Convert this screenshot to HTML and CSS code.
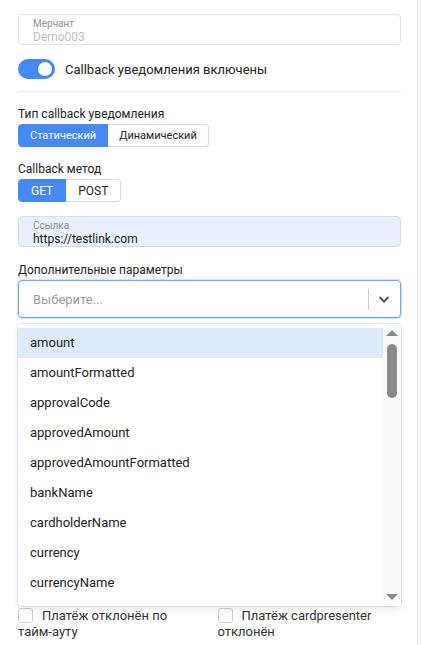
FILE: index.html
```html
<!DOCTYPE html>
<html lang="ru">
<head>
    <meta charset="UTF-8">
    <meta name="viewport" content="width=device-width, initial-scale=1.0">
    <title>Callback настройки</title>
    <link rel="stylesheet" href="styles.css">
</head>
<body>
    <div class="panel">
        <div class="field field-disabled">
            <span class="field-label">Мерчант</span>
            <span class="field-value">Demo003</span>
        </div>

        <label class="switch-row">
            <span class="switch"><span class="switch-knob"></span></span>
            Callback уведомления включены
        </label>

        <div class="divider"></div>

        <div class="group-label">Тип callback уведомления</div>
        <div class="segmented">
            <button class="seg active">Статический</button>
            <button class="seg">Динамический</button>
        </div>

        <div class="group-label">Callback метод</div>
        <div class="segmented segmented-method">
            <button class="seg active">GET</button>
            <button class="seg">POST</button>
        </div>

        <div class="field field-filled">
            <span class="field-label">Ссылка</span>
            <span class="field-value">https://testlink.com</span>
        </div>

        <div class="group-label group-label-wide">Дополнительные параметры</div>
        <div class="select">
            <div class="select-control">
                <span class="select-placeholder">Выберите...</span>
                <span class="select-sep"></span>
                <svg class="select-chevron" width="14" height="14" viewBox="0 0 14 14">
                    <path d="M2.5 5l4.5 4.5L11.5 5" fill="none" stroke="#555" stroke-width="2"/>
                </svg>
            </div>
            <div class="select-menu">
                <ul class="select-options">
                    <li class="option focused">amount</li>
                    <li class="option">amountFormatted</li>
                    <li class="option">approvalCode</li>
                    <li class="option">approvedAmount</li>
                    <li class="option">approvedAmountFormatted</li>
                    <li class="option">bankName</li>
                    <li class="option">cardholderName</li>
                    <li class="option">currency</li>
                    <li class="option">currencyName</li>
                    <li class="option">depositedAmount</li>
                </ul>
                <div class="scrollbar">
                    <span class="scroll-arrow up"></span>
                    <div class="scroll-track"><span class="scroll-thumb"></span></div>
                    <span class="scroll-arrow down"></span>
                </div>
            </div>
        </div>

        <div class="events-grid">
            <label class="check"><span class="box"></span>Платёж отклонён по тайм-ауту</label>
            <label class="check"><span class="box"></span>Платёж cardpresenter отклонён</label>
        </div>
    </div>
</body>
</html>
```

FILE: styles.css
```css
* {
    box-sizing: border-box;
}

body {
    margin: 0;
    background-color: #f6f6f6;
    font-family: Roboto, "Noto Sans", Arial, sans-serif;
    color: #222222;
    overflow: hidden;
}

.panel {
    width: 418px;
    height: 645px;
    background-color: #ffffff;
    border-right: 1px solid #e4e4e4;
    padding: 14px 16px 0 18px;
}

/* text fields with floating label */
.field {
    height: 31px;
    border: 1px solid #e3e3e3;
    border-radius: 4px;
    padding: 3px 14px 0;
    display: flex;
    flex-direction: column;
}

.field-label {
    font-size: 10px;
    line-height: 12px;
    color: #8f8f8f;
}

.field-value {
    font-size: 12px;
    line-height: 15px;
}

.field-disabled .field-value {
    color: #bdbdbd;
}

.field-filled {
    margin-top: 14px;
    background-color: #e8f0fd;
    border-color: #d6dde8;
}

/* toggle */
.switch-row {
    display: flex;
    align-items: center;
    gap: 10px;
    margin-top: 14px;
    font-size: 13px;
    height: 20px;
}

.switch {
    width: 37px;
    height: 20px;
    border-radius: 10px;
    background-color: #4589f6;
    position: relative;
    flex-shrink: 0;
}

.switch-knob {
    position: absolute;
    top: 3px;
    right: 3px;
    width: 14px;
    height: 14px;
    border-radius: 50%;
    background-color: #ffffff;
}

.divider {
    height: 1px;
    background-color: #ececec;
    margin-top: 12px;
}

.group-label {
    font-size: 12px;
    line-height: 16px;
    margin-top: 14px;
    margin-bottom: 2px;
}

.group-label-wide {
    margin-top: 15px;
    margin-bottom: 2px;
}

/* segmented buttons */
.segmented {
    display: flex;
    height: 23px;
}

.seg {
    font-family: inherit;
    font-size: 11px;
    padding: 0 11px;
    background-color: #ffffff;
    color: #222222;
    border: 1px solid #dcdcdc;
    border-left: none;
    cursor: pointer;
}

.segmented-method .seg {
    font-size: 12px;
    padding: 0 12px;
}

.seg:first-child {
    border-left: 1px solid #dcdcdc;
    border-radius: 4px 0 0 4px;
}

.seg:last-child {
    border-radius: 0 4px 4px 0;
}

.seg.active {
    background-color: #4589f6;
    border-color: #4589f6;
    color: #ffffff;
}

/* select */
.select {
    position: relative;
}

.select-control {
    height: 38px;
    border: 1px solid #74a3f2;
    border-radius: 4px;
    box-shadow: 0 0 0 1px #d3e2fb;
    display: flex;
    align-items: center;
    padding-left: 14px;
}

.select-placeholder {
    flex: 1;
    font-size: 13px;
    color: #9a9a9a;
}

.select-sep {
    width: 1px;
    height: 21px;
    background-color: #cccccc;
}

.select-chevron {
    margin: 0 9px 0 8px;
}

.select-menu {
    position: absolute;
    top: 44px;
    left: 0;
    right: 0;
    height: 282px;
    background-color: #ffffff;
    border-radius: 4px;
    box-shadow: 0 0 0 1px rgba(0, 0, 0, 0.08), 0 3px 8px rgba(0, 0, 0, 0.1);
    display: flex;
    overflow: hidden;
    z-index: 2;
}

.select-options {
    list-style: none;
    margin: 0;
    padding: 4px 0 0;
    flex: 1;
}

.option {
    height: 30px;
    line-height: 30px;
    padding-left: 12px;
    font-size: 13px;
}

.option.focused {
    background-color: #deebfd;
}

.scrollbar {
    width: 18px;
    display: flex;
    flex-direction: column;
    align-items: center;
    background-color: #fafafa;
    padding: 6px 0 6px;
}

.scroll-arrow {
    width: 0;
    height: 0;
    border-left: 6px solid transparent;
    border-right: 6px solid transparent;
}

.scroll-arrow.up {
    border-bottom: 6px solid #8c8c8c;
}

.scroll-arrow.down {
    border-top: 6px solid #8c8c8c;
}

.scroll-track {
    flex: 1;
    padding-top: 8px;
}

.scroll-thumb {
    display: block;
    width: 10px;
    height: 54px;
    border-radius: 5px;
    background-color: #8a8a8a;
}

/* event checkboxes */
.events-grid {
    display: grid;
    grid-template-columns: 1fr 1fr;
    column-gap: 16px;
    margin-top: 290px;
}

.check {
    display: block;
    font-size: 13px;
    line-height: 16px;
    color: #333333;
}

.box {
    display: inline-block;
    width: 15px;
    height: 15px;
    border: 1px solid #cfcfcf;
    border-radius: 3px;
    vertical-align: -3px;
    margin-right: 9px;
}
```
